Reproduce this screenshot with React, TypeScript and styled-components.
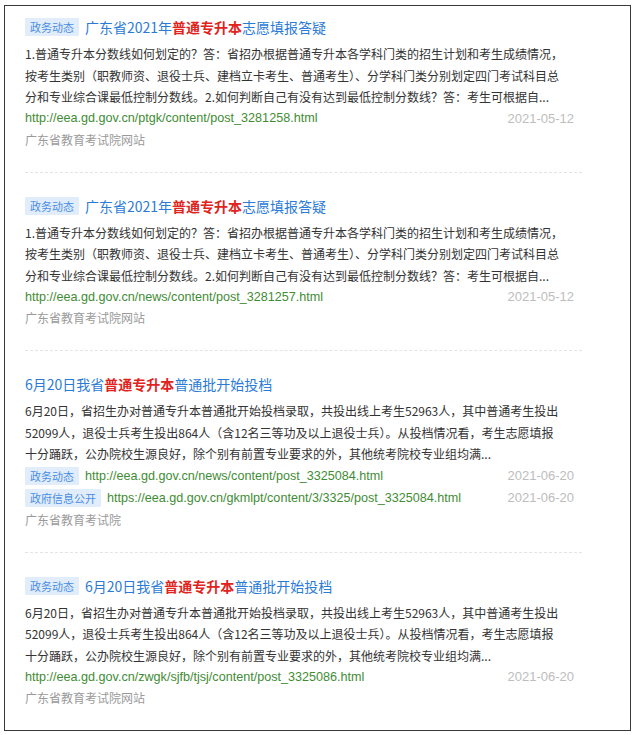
import React, { FC } from "react";
import styled, { createGlobalStyle } from "styled-components";

const GlobalStyle = createGlobalStyle`
  html, body {
    margin: 0;
    padding: 0;
    background: #ffffff;
  }
  body {
    font-family: "Liberation Sans", "Noto Sans CJK SC", sans-serif;
  }
`;

type Link = { tag?: string; url: string; date: string };

type ResultItem = {
  tag?: string;
  title: [string, string, string];
  lines: string[];
  links: Link[];
  source: string;
};

const items: ResultItem[] = [
  {
    tag: "政务动态",
    title: ["广东省2021年", "普通专升本", "志愿填报答疑"],
    lines: [
      "1.普通专升本分数线如何划定的？答：省招办根据普通专升本各学科门类的招生计划和考生成绩情况，",
      "按考生类别（职教师资、退役士兵、建档立卡考生、普通考生）、分学科门类分别划定四门考试科目总",
      "分和专业综合课最低控制分数线。2.如何判断自己有没有达到最低控制分数线？答：考生可根据自...",
    ],
    links: [{ url: "http://eea.gd.gov.cn/ptgk/content/post_3281258.html", date: "2021-05-12" }],
    source: "广东省教育考试院网站",
  },
  {
    tag: "政务动态",
    title: ["广东省2021年", "普通专升本", "志愿填报答疑"],
    lines: [
      "1.普通专升本分数线如何划定的？答：省招办根据普通专升本各学科门类的招生计划和考生成绩情况，",
      "按考生类别（职教师资、退役士兵、建档立卡考生、普通考生）、分学科门类分别划定四门考试科目总",
      "分和专业综合课最低控制分数线。2.如何判断自己有没有达到最低控制分数线？答：考生可根据自...",
    ],
    links: [{ url: "http://eea.gd.gov.cn/news/content/post_3281257.html", date: "2021-05-12" }],
    source: "广东省教育考试院网站",
  },
  {
    title: ["6月20日我省", "普通专升本", "普通批开始投档"],
    lines: [
      "6月20日，省招生办对普通专升本普通批开始投档录取，共投出线上考生52963人，其中普通考生投出",
      "52099人，退役士兵考生投出864人（含12名三等功及以上退役士兵）。从投档情况看，考生志愿填报",
      "十分踊跃，公办院校生源良好，除个别有前置专业要求的外，其他统考院校专业组均满...",
    ],
    links: [
      { tag: "政务动态", url: "http://eea.gd.gov.cn/news/content/post_3325084.html", date: "2021-06-20" },
      {
        tag: "政府信息公开",
        url: "https://eea.gd.gov.cn/gkmlpt/content/3/3325/post_3325084.html",
        date: "2021-06-20",
      },
    ],
    source: "广东省教育考试院",
  },
  {
    tag: "政务动态",
    title: ["6月20日我省", "普通专升本", "普通批开始投档"],
    lines: [
      "6月20日，省招生办对普通专升本普通批开始投档录取，共投出线上考生52963人，其中普通考生投出",
      "52099人，退役士兵考生投出864人（含12名三等功及以上退役士兵）。从投档情况看，考生志愿填报",
      "十分踊跃，公办院校生源良好，除个别有前置专业要求的外，其他统考院校专业组均满...",
    ],
    links: [{ url: "http://eea.gd.gov.cn/zwgk/sjfb/tjsj/content/post_3325086.html", date: "2021-06-20" }],
    source: "广东省教育考试院网站",
  },
];

const Frame = styled.div`
  margin: 5px 4px 0 4px;
  width: 627px;
  border: 1px solid #3a3a3a;
  padding: 0 48px 0 20px;
  box-sizing: border-box;
  background: #ffffff;
`;

const Item = styled.div`
  padding: 21px 0 22px;
  border-bottom: 1px dashed #e4e4e4;

  &:first-child {
    padding-top: 9px;
  }
  &:last-child {
    border-bottom: none;
  }
`;

const TitleRow = styled.div`
  display: flex;
  align-items: center;
  height: 24px;
  margin-bottom: 4px;
`;

const Tag = styled.span`
  display: inline-flex;
  align-items: center;
  flex-shrink: 0;
  height: 18px;
  padding: 0 5px;
  margin-right: 6px;
  background: #e2edfc;
  color: #4a8de2;
  font-family: "Noto Sans CJK SC", sans-serif;
  font-size: 11px;
  border-radius: 1px;
`;

const Title = styled.a`
  font-family: "Noto Sans CJK SC", sans-serif;
  font-size: 14px;
  line-height: 24px;
  color: #2b7bd6;
  text-decoration: none;
  white-space: nowrap;
`;

const Highlight = styled.em`
  font-style: normal;
  font-weight: bold;
  color: #e0231c;
`;

const Summary = styled.div`
  font-family: "Noto Sans CJK SC", sans-serif;
  font-size: 12px;
  line-height: 21.5px;
  color: #333333;
`;

const SummaryLine = styled.span`
  display: block;
  white-space: nowrap;
`;

const LinkRow = styled.div<{ $tall?: boolean }>`
  display: flex;
  align-items: center;
  height: ${({ $tall }) => ($tall ? "22px" : "21px")};
`;

const Url = styled.span`
  flex: 1;
  font-size: 12.6px;
  color: #3f8c35;
  white-space: nowrap;
`;

const DateText = styled.span`
  font-size: 13px;
  color: #bdbdbd;
  margin-right: 8px;
`;

const Source = styled.div`
  font-family: "Noto Sans CJK SC", sans-serif;
  font-size: 12px;
  line-height: 21px;
  color: #9a9a9a;
`;

const Result: FC<{ item: ResultItem }> = ({ item }) => {
  const [before, hit, after] = item.title;
  const tall = item.links.some((l) => l.tag);
  return (
    <Item>
      <TitleRow>
        {item.tag && <Tag>{item.tag}</Tag>}
        <Title href="#">
          {before}
          <Highlight>{hit}</Highlight>
          {after}
        </Title>
      </TitleRow>
      <Summary>
        {item.lines.map((line, i) => (
          <SummaryLine key={i}>{line}</SummaryLine>
        ))}
      </Summary>
      {item.links.map((link, i) => (
        <LinkRow key={i} $tall={tall}>
          {link.tag && <Tag>{link.tag}</Tag>}
          <Url>{link.url}</Url>
          <DateText>{link.date}</DateText>
        </LinkRow>
      ))}
      <Source>{item.source}</Source>
    </Item>
  );
};

const App: FC = () => (
  <>
    <GlobalStyle />
    <Frame>
      {items.map((item, i) => (
        <Result key={i} item={item} />
      ))}
    </Frame>
  </>
);

export default App;
